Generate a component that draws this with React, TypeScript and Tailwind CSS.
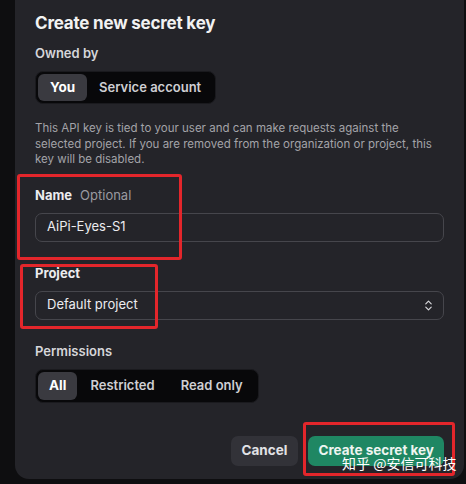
import React from "react";
import { ChevronsUpDown } from "lucide-react";

export default function App() {
  return (
    <div
      className="w-[466px] h-[484px] bg-[#0e0e10] pl-[15px] pr-[2px] pb-[5px]"
      style={{ fontFamily: "Inter, 'Noto Sans', sans-serif" }}
    >
      <div className="relative h-full bg-[#242429] rounded-b-[14px] px-[20px] pt-[9px] flex flex-col">
        <h1 className="text-[17px] leading-[28px] font-bold text-[#f2f2f2] tracking-[-0.2px]">
          Create new secret key
        </h1>
        <div className="mt-[6px] text-[13px] leading-[20px] font-semibold text-[#d6d6da]">Owned by</div>
        <div className="mt-[8px] flex items-center self-start h-[33px] p-[2px] rounded-[8px] bg-[#08080a] border border-[#1a1a1e]">
          <div className="h-full px-[12px] flex items-center rounded-[6px] bg-[#3a3a40] text-[13.5px] font-bold text-white">You</div>
          <div className="h-full px-[12px] flex items-center text-[13px] font-semibold text-[#cfcfd3]">Service account</div>
        </div>
        <p className="mt-[17px] text-[11.5px] leading-[15.5px] text-[#a3a3a8]">
          This API key is tied to your user and can make requests against the selected project. If you are removed from the organization or project, this key will be disabled.
        </p>
        <div className="mt-[17px] text-[13px] leading-[20px] flex gap-[8px]">
          <span className="font-bold text-[#ececef]">Name</span>
          <span className="text-[#9a9aa0]">Optional</span>
        </div>
        <div className="mt-[8px] h-[29px] rounded-[7px] border border-[#46464c] flex items-center px-[11px] text-[13px] text-[#ececef]">
          AiPi-Eyes-S1
        </div>
        <div className="mt-[21px] text-[13px] leading-[20px] font-bold text-[#ececef]">Project</div>
        <div className="mt-[8px] h-[29px] rounded-[7px] border border-[#46464c] flex items-center justify-between pl-[11px] pr-[8px] text-[13px] text-[#ececef]">
          <span>Default project</span>
          <ChevronsUpDown size={13} strokeWidth={2.2} className="text-[#d8d8dc]" />
        </div>
        <div className="mt-[21px] text-[13px] leading-[20px] font-semibold text-[#d6d6da]">Permissions</div>
        <div className="mt-[8px] flex items-center self-start h-[34px] p-[2px] rounded-[8px] bg-[#08080a] border border-[#1a1a1e]">
          <div className="h-full px-[11px] flex items-center rounded-[6px] bg-[#3a3a40] text-[13.5px] font-bold text-white">All</div>
          <div className="h-full px-[13px] flex items-center text-[13px] font-semibold text-[#cfcfd3]">Restricted</div>
          <div className="h-full px-[13px] flex items-center text-[13px] font-semibold text-[#cfcfd3]">Read only</div>
        </div>
        <div className="mt-[33px] flex justify-end gap-[10px]">
          <button className="h-[30px] px-[11px] rounded-[7px] bg-[#323238] text-[13.5px] font-bold text-[#e2e2e6]">Cancel</button>
          <button className="h-[30px] px-[10px] rounded-[7px] bg-[#1f8763] text-[13.5px] font-bold text-[#eef5f1]">Create secret key</button>
        </div>

        <div className="absolute left-[2px] top-[174px] w-[165px] h-[86px] border-[3px] border-[#e3262b] rounded-[3px]" />
        <div className="absolute left-[5px] top-[264px] w-[138px] h-[65px] border-[3px] border-[#e3262b] rounded-[3px]" />
        <div className="absolute left-[288px] top-[422px] w-[152px] h-[54px] border-[3px] border-[#e3262b] rounded-[3px]" />
        <div
          className="absolute left-[327px] top-[453px] text-[14px] leading-[20px] text-white whitespace-nowrap"
          style={{ fontFamily: "'Noto Sans CJK SC', sans-serif" }}
        >
          知乎 @安信可科技
        </div>
      </div>
    </div>
  );
}
